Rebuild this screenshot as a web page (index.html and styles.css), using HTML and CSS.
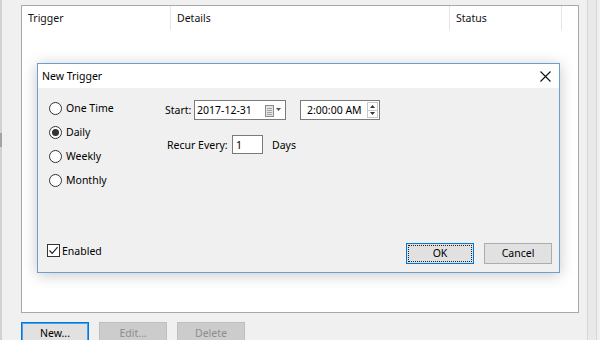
FILE: index.html
```html
<!DOCTYPE html>
<html>
<head>
<meta charset="utf-8">
<link rel="stylesheet" href="styles.css">
</head>
<body>
<div class="window">
  <div class="edge-left"><div class="edge-line"><div class="edge-mark"></div></div></div>
  <div class="main">
    <div class="list">
      <div class="list-header">
        <div class="col col-trigger">Trigger</div>
        <div class="col col-details">Details</div>
        <div class="col col-status">Status</div>
        <div class="col col-rest"></div>
      </div>
    </div>
    <div class="actions">
      <button class="btn btn-focus">New...</button>
      <button class="btn btn-disabled">Edit...</button>
      <button class="btn btn-disabled">Delete</button>
    </div>
  </div>
  <div class="edge-right"></div>
</div>

<div class="dialog">
  <div class="titlebar">
    <span class="title">New Trigger</span>
    <svg class="close" width="11" height="11" viewBox="0 0 11 11"><path d="M0.5 0.5L10.5 10.5M10.5 0.5L0.5 10.5" stroke="#111" stroke-width="1.1" fill="none"/></svg>
  </div>
  <div class="dialog-body">
    <div class="content">
      <div class="radios">
        <label class="radio"><span class="dot"></span>One Time</label>
        <label class="radio"><span class="dot checked"></span>Daily</label>
        <label class="radio"><span class="dot"></span>Weekly</label>
        <label class="radio"><span class="dot"></span>Monthly</label>
      </div>
      <div class="settings">
        <div class="row">
          <span class="start-label">Start:</span>
          <div class="field date-field">
            <span class="field-text">2017-12-31</span>
            <span class="date-icons">
              <svg width="9" height="12" viewBox="0 0 9 12"><rect x="0.5" y="0.5" width="8" height="11" fill="#e4e4e4" stroke="#8a8a8a"/><path d="M2 3.5h5M2 5.5h5M2 7.5h5M2 9.5h5" stroke="#a5a5a5" fill="none"/></svg>
              <svg class="drop" width="5" height="3" viewBox="0 0 5 3"><path d="M0 0H5L2.5 3Z" fill="#555"/></svg>
            </span>
          </div>
          <div class="field time-field">
            <span class="field-text">2:00:00 AM</span>
            <span class="spinner">
              <span class="spin-half"><svg width="5" height="3" viewBox="0 0 5 3"><path d="M0 3H5L2.5 0Z" fill="#333"/></svg></span>
              <span class="spin-half spin-down"><svg width="5" height="3" viewBox="0 0 5 3"><path d="M0 0H5L2.5 3Z" fill="#333"/></svg></span>
            </span>
          </div>
        </div>
        <div class="row row-recur">
          <span class="recur-label">Recur Every:</span>
          <div class="field num-field"><span class="field-text">1</span></div>
          <span class="days">Days</span>
        </div>
      </div>
    </div>
    <div class="footer">
      <label class="check">
        <span class="box"><svg width="11" height="11" viewBox="0 0 11 11"><path d="M1.5 5.5L4.2 8.3L9.6 2.2" stroke="#222" stroke-width="1.2" fill="none"/></svg></span>
        Enabled
      </label>
      <div class="footer-buttons">
        <button class="btn btn-ok">OK</button>
        <button class="btn">Cancel</button>
      </div>
    </div>
  </div>
</div>
</body>
</html>
```

FILE: styles.css
```css
html, body {
  margin: 0;
  padding: 0;
}
body {
  width: 600px;
  height: 340px;
  overflow: hidden;
  background: #f0f0f0;
  font-family: "Segoe UI", "Noto Sans", sans-serif;
  font-size: 10.5px;
  color: #000;
  position: relative;
}
.window {
  display: flex;
  height: 340px;
}
.edge-left {
  width: 21px;
  flex: none;
}
.edge-line {
  width: 2px;
  height: 100%;
  background: #d2d2d2;
  display: flex;
  flex-direction: column;
}
.edge-mark {
  margin-top: 133px;
  height: 14px;
  width: 2px;
  background: #a3a3a3;
}
.main {
  width: 558px;
  flex: none;
  padding-top: 5px;
}
.list {
  height: 308px;
  box-sizing: border-box;
  background: #fff;
  border: 1px solid #a8a8a8;
}
.list-header {
  display: flex;
  height: 24px;
}
.col {
  box-sizing: border-box;
  border-right: 1px solid #e5e5e5;
  display: flex;
  align-items: center;
  padding-left: 6px;
  color: #111;
}
.col-trigger { width: 149px; }
.col-details { width: 279px; }
.col-status { width: 112px; }
.col-rest { width: 0; border-right: none; }
.actions {
  display: flex;
  gap: 10px;
  margin-top: 9px;
}
.btn {
  font: inherit;
  color: #000;
  width: 68px;
  height: 23px;
  box-sizing: border-box;
  background: #e1e1e1;
  border: 1px solid #adadad;
  padding: 0;
  margin: 0;
  line-height: 1;
}
.btn-focus {
  border: 1px solid #0078d7;
  box-shadow: inset 0 0 0 1px #4aa0e6;
}
.btn-disabled {
  background: #cccccc;
  border-color: #bfbfbf;
  color: #8d8d8d;
}
.edge-right {
  margin-left: 8px;
  width: 10px;
  box-sizing: border-box;
  border-left: 1px solid #d7d7d7;
  border-right: 1px solid #d7d7d7;
  background: #e9e9e9;
  flex: none;
}

/* dialog */
.dialog {
  position: absolute;
  left: 37px;
  top: 63px;
  width: 523px;
  height: 210px;
  box-sizing: border-box;
  border: 1px solid #6f9dd0;
  background: #f0f0f0;
  box-shadow: 0 2px 14px rgba(0, 0, 0, 0.22);
  display: flex;
  flex-direction: column;
}
.titlebar {
  height: 24px;
  background: #fff;
  display: flex;
  align-items: center;
  padding-left: 4px;
  padding-right: 8px;
  flex: none;
}
.title {
  flex: 1;
}
.close {
  display: block;
}
.dialog-body {
  flex: 1;
  display: flex;
  flex-direction: column;
}
.content {
  display: flex;
}
.radios {
  width: 116px;
  padding-left: 11px;
  padding-top: 8px;
  display: flex;
  flex-direction: column;
}
.radio {
  height: 24px;
  display: flex;
  align-items: center;
  gap: 4px;
}
.dot {
  width: 13px;
  height: 13px;
  box-sizing: border-box;
  border: 1px solid #333;
  border-radius: 50%;
  background: #fff;
  display: flex;
  align-items: center;
  justify-content: center;
}
.dot.checked::after {
  content: "";
  width: 7px;
  height: 7px;
  border-radius: 50%;
  background: #333;
}
.settings {
  padding-top: 12px;
  display: flex;
  flex-direction: column;
}
.row {
  display: flex;
  align-items: center;
  height: 20px;
}
.row-recur {
  margin-top: 15px;
  height: 19px;
}
.start-label {
  width: 29px;
}
.recur-label {
  margin-left: 2px;
  width: 65px;
}
.field {
  box-sizing: border-box;
  height: 20px;
  background: #fff;
  border: 1px solid #7a7a7a;
  display: flex;
  align-items: center;
}
.date-field {
  width: 92px;
  padding-left: 2px;
  padding-right: 4px;
}
.field-text {
  flex: 1;
}
.date-icons {
  display: flex;
  align-items: flex-start;
  gap: 2px;
  padding-top: 1px;
}
.date-icons .drop {
  margin-top: 3px;
}
.time-field {
  margin-left: 14px;
  width: 80px;
  padding-left: 6px;
  padding-right: 1px;
}
.spinner {
  width: 11px;
  height: 16px;
  box-sizing: border-box;
  border: 1px solid #c8c8c8;
  display: flex;
  flex-direction: column;
}
.spin-half {
  flex: 1;
  display: flex;
  align-items: center;
  justify-content: center;
}
.spin-down {
  border-top: 1px solid #c8c8c8;
}
.spinner svg {
  display: block;
}
.num-field {
  width: 31px;
  height: 19px;
  padding-left: 3px;
}
.days {
  margin-left: 9px;
}
.footer {
  margin-top: auto;
  display: flex;
  align-items: center;
  padding: 0 7px 8px 9px;
}
.check {
  display: flex;
  align-items: center;
  gap: 2px;
  margin-bottom: 6px;
  flex: 1;
}
.box {
  width: 13px;
  height: 13px;
  box-sizing: border-box;
  border: 1px solid #333;
  background: #fff;
  display: flex;
  align-items: center;
  justify-content: center;
}
.box svg {
  display: block;
}
.footer-buttons {
  display: flex;
  gap: 10px;
}
.footer-buttons .btn {
  width: 68px;
  height: 21px;
}
.btn-ok {
  border: 1px solid #0078d7 !important;
  outline: 1px dotted #222;
  outline-offset: -3px;
}
```
